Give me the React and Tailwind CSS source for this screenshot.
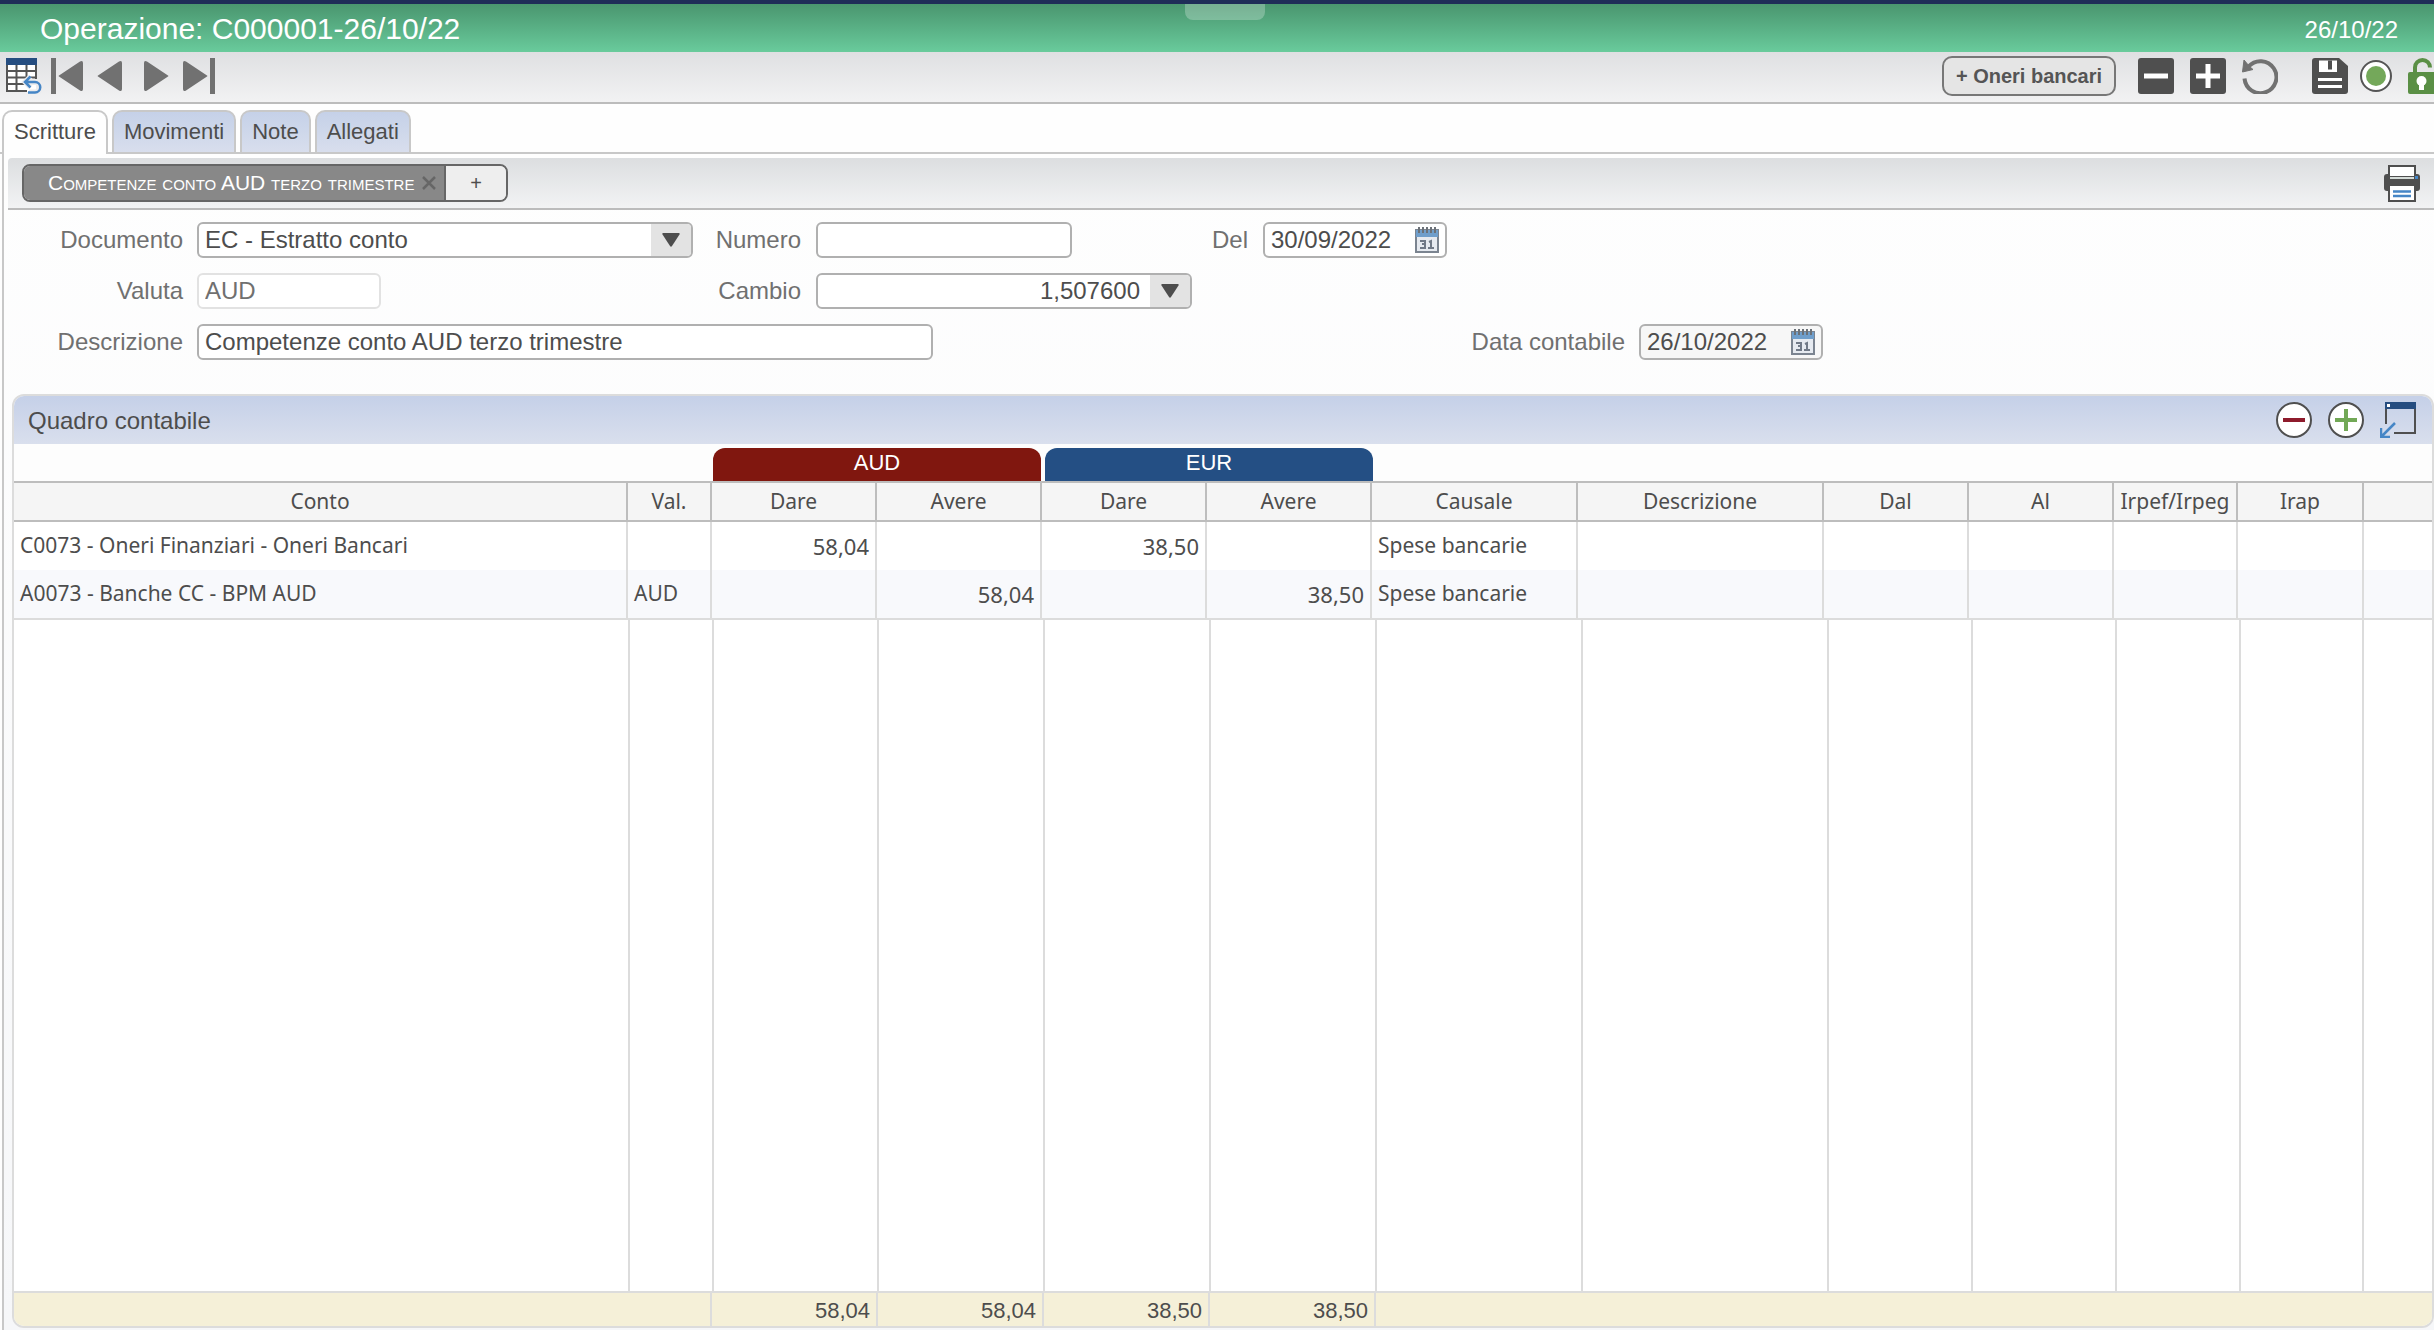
import { useState } from 'react'

const tabs = ['Scritture', 'Movimenti', 'Note', 'Allegati']

const columns = [
  { label: 'Conto', width: 'w-[614px]' },
  { label: 'Val.', width: 'w-[84px]' },
  { label: 'Dare', width: 'w-[165px]' },
  { label: 'Avere', width: 'w-[165px]' },
  { label: 'Dare', width: 'w-[165px]' },
  { label: 'Avere', width: 'w-[165px]' },
  { label: 'Causale', width: 'w-[206px]' },
  { label: 'Descrizione', width: 'w-[246px]' },
  { label: 'Dal', width: 'w-[145px]' },
  { label: 'Al', width: 'w-[145px]' },
  { label: 'Irpef/Irpeg', width: 'w-[124px]' },
  { label: 'Irap', width: 'w-[126px]' },
  { label: '', width: '' },
]

const rows = [
  ['C0073 - Oneri Finanziari - Oneri Bancari', '', '58,04', '', '38,50', '', 'Spese bancarie', '', '', '', '', '', ''],
  ['A0073 - Banche CC - BPM AUD', 'AUD', '', '58,04', '', '38,50', 'Spese bancarie', '', '', '', '', '', ''],
]

const fillers = [
  'w-[616px]', 'w-[84px]', 'w-[165px]', 'w-[166px]', 'w-[166px]', 'w-[166px]',
  'w-[206px]', 'w-[246px]', 'w-[144px]', 'w-[144px]', 'w-[124px]', 'w-[123px]',
]

const totals = ['58,04', '58,04', '38,50', '38,50']

const field = 'h-9 rounded-md border-2 border-[#b0b0b0] text-2xl leading-8 text-[#4d4d4d] outline-none'

function TableIcon() {
  return (
    <svg width="36" height="36" viewBox="0 0 36 36" fill="none">
      <rect x="1" y="2" width="29" height="32" fill="#fff" />
      <path d="M1 13h29M1 19.500h29M1 26h18M1 33h20M10.500 7v26M20.500 7v15M1 6v28M30 6v15" stroke="#555" strokeWidth="2" />
      <rect x="0" y="0" width="31" height="7" fill="#254d80" />
      <path d="M24.500 19l-5 5 5 5M20 24h9a5 5 0 0 1 0 10.500h-6" stroke="#ececee" strokeWidth="6" />
      <path d="M24.500 18.500 19 24l5.500 5.500M19.500 24h9.500a5 5 0 0 1 0 10.500h-7" stroke="#4686c6" strokeWidth="2.500" />
    </svg>
  )
}

function ArrowIcon({ bar, right }) {
  return (
    <svg width="34" height="36" viewBox="0 0 34 36" fill="#717171" className={right ? 'rotate-180' : ''}>
      {bar && <rect x="1" y="0" width="5" height="36" />}
      <path d="M9 17.500 30 3.500q3-1.500 3 1.500v26q0 3-3 1.500L9 18.500q-1-.5 0-1z" />
    </svg>
  )
}

function SquareIcon({ plus }) {
  return (
    <svg width="36" height="36" viewBox="0 0 36 36">
      <rect width="36" height="36" rx="3" fill="#4f4f4f" />
      <path d={plus ? 'M6 18h24M18 6v24' : 'M6 18h24'} stroke="#fff" strokeWidth="5" />
    </svg>
  )
}

function ReloadIcon() {
  return (
    <svg width="36" height="36" viewBox="0 0 36 36" fill="none">
      <path d="M6.500 8.500A16 16 0 1 1 2.500 20.500" stroke="#717171" strokeWidth="4" />
      <path d="M2 2 .500 14 11 11.500 7.500 8.500z" fill="#717171" stroke="#717171" />
    </svg>
  )
}

function SaveIcon() {
  return (
    <svg width="36" height="36" viewBox="0 0 36 36">
      <path d="M3 0h24l9 8v25a3 3 0 0 1-3 3H3a3 3 0 0 1-3-3V3a3 3 0 0 1 3-3z" fill="#4f4f4f" />
      <path d="M7 2.500h18V14H7z" fill="#fff" />
      <path d="M18 2.500v9" stroke="#4f4f4f" strokeWidth="4" />
      <path d="M6 21.500h24M6 28.500h24" stroke="#fff" strokeWidth="3" />
    </svg>
  )
}

function LockIcon() {
  return (
    <svg width="26" height="36" viewBox="0 0 26 36">
      <path d="M7 15V9.500a7.500 7.500 0 0 1 15 0" fill="none" stroke="#5a8f45" strokeWidth="4" />
      <path d="M2 14h24v22H2a2 2 0 0 1-2-2V16a2 2 0 0 1 2-2z" fill="#5a8f45" />
      <circle cx="13.500" cy="23" r="5" fill="#fff" />
      <path d="M11 24h5v8h-5z" fill="#fff" />
    </svg>
  )
}

function PrinterIcon() {
  return (
    <svg width="36" height="37" viewBox="0 0 36 37">
      <rect x="5" y="1" width="26" height="12" fill="#fff" stroke="#4f4f4f" strokeWidth="2" />
      <rect x="0" y="9" width="36" height="17" rx="3" fill="#4f4f4f" />
      <path d="M6 10h24" stroke="#fff" strokeWidth="2" />
      <path d="M6 13h24" stroke="#d5dcd8" strokeWidth="2" />
      <rect x="31" y="11" width="3" height="3" fill="#4686c6" />
      <rect x="5" y="20" width="26" height="16" fill="#fff" stroke="#4f4f4f" strokeWidth="2" />
      <path d="M9 26.500h18M9 31h18" stroke="#4686c6" strokeWidth="2.500" />
    </svg>
  )
}

function CalendarIcon() {
  return (
    <svg width="24" height="26" viewBox="0 0 24 26">
      <rect x="1" y="3" width="22" height="22" fill="#e6eaf0" stroke="#7b8490" strokeWidth="2" />
      <rect x="1" y="3" width="22" height="7" fill="#6f9ecb" />
      <path d="M4 0v6M8 0v6M12 0v6M16 0v6M20 0v6" stroke="#6b7178" strokeWidth="2" />
      <path d="M5 14h5v3H7h3v4H5M14 15l2-1v7M13 21h6" fill="none" stroke="#707987" strokeWidth="2" />
    </svg>
  )
}

function CircleIcon({ plus }) {
  return (
    <svg width="36" height="36" viewBox="0 0 36 36">
      <circle cx="18" cy="18" r="17" fill="#fff" stroke="#4f4f4f" strokeWidth="2" />
      {plus
        ? <path d="M7 18h22M18 7v22" stroke="#72a856" strokeWidth="4" />
        : <path d="M7 18h22" stroke="#8e1b2c" strokeWidth="4" />}
    </svg>
  )
}

function WindowIcon() {
  return (
    <svg width="36" height="36" viewBox="0 0 36 36" fill="none">
      <path d="M6 6v16M14 31h21V6" stroke="#4f4f4f" strokeWidth="2" />
      <rect x="5" y="0" width="31" height="7" fill="#254d80" />
      <rect x="7" y="2" width="3" height="3" fill="#fff" />
      <path d="M1.500 34.500 15 21M1 26v9h9" stroke="#4686c6" strokeWidth="2.500" />
    </svg>
  )
}

function Triangle() {
  return (
    <svg width="18" height="14" viewBox="0 0 18 14" fill="#4d4d4d">
      <path d="M1 0h16q1 0 .5 1.500L10 13q-1 1.500-2 0L.500 1.500Q0 0 1 0z" />
    </svg>
  )
}

function DateField({ id, value, gray }) {
  return (
    <div className={`flex w-[184px] items-center gap-4 px-1.5 ${field} ${gray ? 'bg-[#f7f7f7]' : 'bg-white'}`}>
      <input id={id} defaultValue={value} className="w-32 outline-none" />
      <button type="button" aria-label="Calendario" className="shrink-0"><CalendarIcon /></button>
    </div>
  )
}

function App() {
  const [active, setActive] = useState('Scritture')

  const align = (i) => (i >= 2 && i <= 5 ? 'text-right text-[22px]' : 'text-left')

  return (
    <div className="flex min-h-screen flex-col overflow-hidden bg-[#fefefe] font-['Liberation_Sans',sans-serif] text-[#4d4d4d]">
      <header className="relative flex h-[52px] items-center justify-between border-t-4 border-[#1f2d58] bg-linear-to-b from-[#4a966f] to-[#69cb9c] pr-9 pl-10 text-white">
        <h1 className="text-[30px]">Operazione: C000001-26/10/22</h1>
        <span className="pt-1 text-2xl">26/10/22</span>
        <div className="absolute top-0 left-1/2 h-4 w-20 -translate-x-8 rounded-b-lg bg-white/25" />
      </header>

      <div className="flex h-[52px] items-center border-b-2 border-[#bcbcbc] bg-linear-to-b from-[#dfe0e2] to-[#f2f2f3] pb-0.5 pl-1.5">
        <button aria-label="Elenco" className="mr-2"><TableIcon /></button>
        <div className="flex gap-5">
          <div className="flex gap-[5px]">
            <button aria-label="Primo"><ArrowIcon bar /></button>
            <button aria-label="Precedente"><ArrowIcon /></button>
          </div>
          <div className="flex gap-[5px]">
            <button aria-label="Successivo"><ArrowIcon right /></button>
            <button aria-label="Ultimo"><ArrowIcon bar right /></button>
          </div>
        </div>
        <div className="ml-auto flex items-center">
          <button className="mr-[22px] h-10 w-[174px] rounded-[10px] border-2 border-[#777] bg-[#e5e5e5] text-xl font-bold text-[#555]">+ Oneri bancari</button>
          <button aria-label="Rimuovi" className="mr-4"><SquareIcon /></button>
          <button aria-label="Aggiungi" className="mr-4"><SquareIcon plus /></button>
          <button aria-label="Annulla" className="mr-[34px]"><ReloadIcon /></button>
          <button aria-label="Salva" className="mr-3"><SaveIcon /></button>
          <span className="mr-4 flex size-8 items-center justify-center rounded-full border-2 border-[#555] bg-white">
            <span className="size-5 rounded-full bg-[#74a85a]" />
          </span>
          <button aria-label="Blocca"><LockIcon /></button>
        </div>
      </div>

      <nav className="flex h-[50px] shrink-0 items-end gap-1 border-b-2 border-[#c8c8c8] pl-0.5">
        {tabs.map((tab) => (
          <button
            key={tab}
            onClick={() => setActive(tab)}
            className={`rounded-t-[10px] border-2 border-b-0 border-[#c8c8c8] px-2.5 text-[22px] ${tab === active ? '-mb-0.5 h-[44px] bg-[#fefefe] pb-1' : 'h-[42px] bg-linear-to-b from-[#c5d1e8] to-[#d8deed] pb-0.5'}`}
          >
            {tab}
          </button>
        ))}
      </nav>

      <main className="ml-0.5 flex flex-1 flex-col border-l-2 border-[#c8c8c8] bg-linear-to-b from-[#fefefe] to-[#f6f7f9] pt-1">
        <div className="ml-1 flex h-[52px] items-center justify-between rounded-tl border-b-2 border-[#bcbcbc] bg-linear-to-b from-[#dcdee0] to-[#f2f3f4] px-3.5">
          <div className="flex h-[38px] overflow-hidden rounded-lg border-2 border-[#666] text-xl">
            <div className="flex w-[420px] items-center justify-between bg-[#888] pr-2 pl-6 text-white">
              <span className="text-[21px] whitespace-nowrap [font-variant:small-caps]">Competenze conto AUD terzo trimestre</span>
              <button aria-label="Chiudi">
                <svg width="14" height="14" viewBox="0 0 14 14" stroke="#666" strokeWidth="2.500"><path d="M1 1l12 12M13 1 1 13" /></svg>
              </button>
            </div>
            <button className="w-[62px] border-l-2 border-[#666] bg-[#eee]">+</button>
          </div>
          <button aria-label="Stampa"><PrinterIcon /></button>
        </div>

        <form className="flex flex-col gap-[15px] pt-3 text-2xl text-[#707070]">
          <div className="flex items-center">
            <label htmlFor="documento" className="w-[179px] text-right">Documento</label>
            <div className="relative ml-3.5">
              <select id="documento" className={`w-[496px] appearance-none bg-white pl-1.5 ${field}`}>
                <option>EC - Estratto conto</option>
              </select>
              <div className="pointer-events-none absolute inset-y-0.5 right-0.5 flex w-10 items-center justify-center rounded-r bg-[#e3e3e3]"><Triangle /></div>
            </div>
            <label htmlFor="numero" className="w-[108px] text-right">Numero</label>
            <input id="numero" className={`ml-[15px] w-64 bg-white px-1.5 ${field}`} />
            <label htmlFor="del" className="w-[176px] text-right">Del</label>
            <div className="ml-[15px]"><DateField id="del" value="30/09/2022" /></div>
          </div>
          <div className="flex items-center">
            <label htmlFor="valuta" className="w-[179px] text-right">Valuta</label>
            <input id="valuta" readOnly defaultValue="AUD" className="ml-3.5 h-9 w-[184px] rounded-md border-2 border-[#e2e2e2] bg-white px-1.5 outline-none" />
            <label htmlFor="cambio" className="w-[420px] text-right">Cambio</label>
            <div className={`ml-[15px] flex w-[376px] overflow-hidden bg-white ${field}`}>
              <input id="cambio" defaultValue="1,507600" className="min-w-0 flex-1 pr-2.5 text-right outline-none" />
              <button type="button" aria-label="Scegli cambio" className="flex w-10 items-center justify-center bg-[#e3e3e3]"><Triangle /></button>
            </div>
          </div>
          <div className="flex items-center">
            <label htmlFor="descrizione" className="w-[179px] text-right">Descrizione</label>
            <input id="descrizione" defaultValue="Competenze conto AUD terzo trimestre" className={`ml-3.5 w-[736px] bg-white px-1.5 ${field}`} />
            <label htmlFor="contabile" className="w-[692px] text-right">Data contabile</label>
            <div className="ml-3.5"><DateField id="contabile" value="26/10/2022" gray /></div>
          </div>
        </form>

        <section className="mt-[34px] mb-0.5 ml-2 flex flex-1 flex-col overflow-hidden rounded-xl border-2 border-[#dcdcdc] bg-white">
          <div className="flex h-12 items-center justify-between bg-linear-to-b from-[#c5d0e8] to-[#d9dfed] pr-4 pl-3.5">
            <h2 className="pt-0.5 text-2xl">Quadro contabile</h2>
            <div className="flex gap-4">
              <button aria-label="Elimina riga"><CircleIcon /></button>
              <button aria-label="Nuova riga"><CircleIcon plus /></button>
              <button aria-label="Apri finestra"><WindowIcon /></button>
            </div>
          </div>
          <div className="flex h-[37px] items-end gap-1 bg-[#fdfdfd] pl-[699px] text-[22px] leading-[30px] text-white">
            <div className="w-[328px] rounded-t-xl bg-[#80170f] pb-[3px] text-center">AUD</div>
            <div className="w-[328px] rounded-t-xl bg-[#244f84] pb-[3px] text-center">EUR</div>
          </div>

          <table className="w-full table-fixed border-separate border-spacing-0 font-['Noto_Sans',sans-serif] text-[21px]">
            <thead>
              <tr className="h-[41px] bg-[#f5f5f5]">
                {columns.map((col, i) => (
                  <th key={i} className={`border-y-2 border-r-2 border-[#bdbdbd] font-normal last:border-r-0 ${col.width}`}>{col.label}</th>
                ))}
              </tr>
            </thead>
            <tbody>
              {rows.map((row, r) => (
                <tr key={r} className="group h-12 last:h-[50px] even:bg-[#f8f9fc]">
                  {row.map((cell, i) => (
                    <td key={i} className={`border-r-2 border-[#dcdcdc] px-1.5 whitespace-nowrap group-last:border-b-2 last:border-r-0 ${align(i)}`}>{cell}</td>
                  ))}
                </tr>
              ))}
            </tbody>
          </table>

          <div className="flex flex-1">
            {fillers.map((width, i) => (
              <div key={i} className={`shrink-0 border-r-2 border-[#dcdcdc] ${width}`} />
            ))}
          </div>

          <div className="flex h-[35px] items-center border-t-2 border-[#dcdcdc] bg-[#f5f0d8] text-[22px]">
            <div className="h-full w-[698px] border-r-2 border-[#dcdcdc]" />
            {totals.map((total, i) => (
              <div key={i} className="h-full w-[166px] border-r-2 border-[#dcdcdc] pr-1.5 text-right leading-9">{total}</div>
            ))}
          </div>
        </section>
      </main>
    </div>
  )
}

export default App
